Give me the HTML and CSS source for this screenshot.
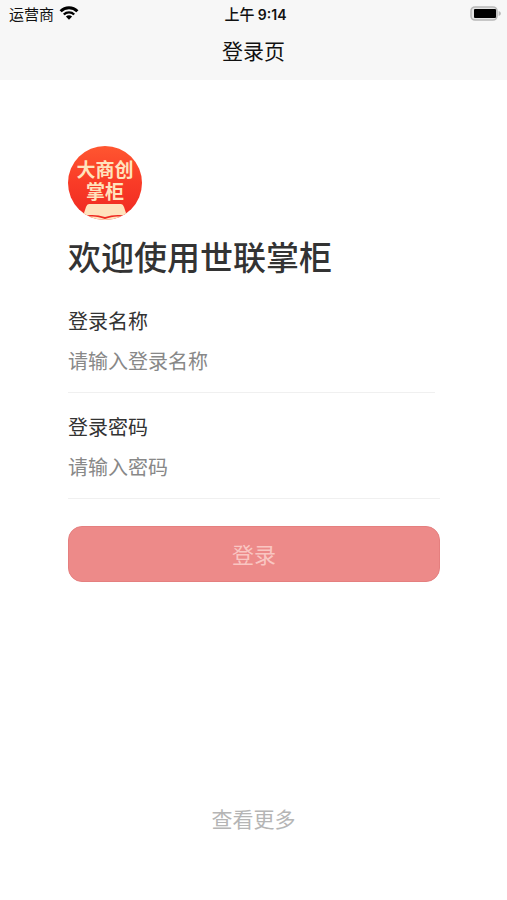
FILE: index.html
```html
<!DOCTYPE html>
<html lang="zh-CN">
<head>
    <meta charset="UTF-8">
    <meta name="viewport" content="width=device-width, initial-scale=1.0">
    <title>登录页</title>
    <link rel="stylesheet" href="styles.css">
</head>
<body>
    <header>
        <div class="status-bar">
            <div class="carrier">
                <span>运营商</span>
                <svg width="20" height="14" viewBox="0 0 20 14" aria-hidden="true">
                    <g fill="none" stroke="#000" stroke-width="3">
                        <path d="M1.6 5.2a12 12 0 0 1 16.8 0"/>
                        <path d="M4.8 8.5a7.5 7.5 0 0 1 10.4 0" stroke-width="2.4"/>
                    </g>
                    <path d="M6.9 10.6a4.6 4.6 0 0 1 6.2 0L10 13.8z"/>
                </svg>
            </div>
            <div class="time">上午 <span>9:14</span></div>
            <div class="battery">
                <svg width="32" height="15" viewBox="0 0 32 15" aria-hidden="true">
                    <rect x="1" y="1" width="26" height="13" rx="4" fill="#e4e4e4" stroke="#b8b8b8" stroke-width="1.6"/>
                    <rect x="4" y="3" width="22" height="9" rx="1"/>
                    <path d="M28.6 5c3 1 3 4 0 5z" fill="#b8b8b8"/>
                </svg>
            </div>
        </div>
        <h1>登录页</h1>
    </header>
    <main>
        <svg class="logo" viewBox="0 0 74 74" role="img" aria-label="大商创掌柜">
            <defs>
                <linearGradient id="logo-bg" x1="0" y1="0" x2="0" y2="1">
                    <stop offset="0" stop-color="#ff5630"/>
                    <stop offset="0.5" stop-color="#f93b27"/>
                    <stop offset="1" stop-color="#ee2922"/>
                </linearGradient>
                <clipPath id="logo-clip">
                    <circle cx="37" cy="37" r="37"/>
                </clipPath>
            </defs>
            <circle cx="37" cy="37" r="37" fill="url(#logo-bg)"/>
            <g clip-path="url(#logo-clip)" fill="#ffe3bd">
                <path d="M21 58h32q2 0 3 3l3 9c-9-2-15-1-22 1-7-2-13-3-22-1l3-9q1-3 3-3z"/>
                <path d="M20 71c6-1 11 0 17 2 6-2 11-3 17-2l-9 4H28z"/>
            </g>
            <text x="37" y="31" class="logo-text">大商创</text>
            <text x="37" y="53" class="logo-text">掌柜</text>
        </svg>
        <h2>欢迎使用世联掌柜</h2>
        <form>
            <div class="field name-field">
                <label for="username">登录名称</label>
                <input type="text" id="username" placeholder="请输入登录名称">
            </div>
            <div class="field">
                <label for="password">登录密码</label>
                <input type="password" id="password" placeholder="请输入密码">
            </div>
            <button type="button" class="login-button">登录</button>
        </form>
    </main>
    <footer>
        <a href="#">查看更多</a>
    </footer>
</body>
</html>
```
FILE: styles.css
```css
* {
    box-sizing: border-box;
}
body {
    font-family: "Noto Sans CJK SC", sans-serif;
    display: flex;
    flex-direction: column;
    min-height: 100vh;
    margin: 0;
    background-color: #fff;
    color: #333;
}
header {
    background-color: #f7f7f7;
    color: #111;
    padding-bottom: 6px;
}
.status-bar {
    display: grid;
    grid-template-columns: 1fr auto 1fr;
    align-items: center;
    height: 26px;
    padding: 0 5px 0 9px;
    font-size: 15px;
}
.carrier {
    display: flex;
    align-items: center;
    gap: 5px;
}
.time {
    font-weight: 500;
}
.time span {
    font-family: Inter, sans-serif;
    font-size: 14px;
    font-weight: 600;
}
.battery {
    display: flex;
    justify-content: flex-end;
}
h1 {
    margin: 0;
    font-size: 21px;
    font-weight: 400;
    line-height: 48px;
    text-align: center;
}
main {
    padding: 66px 67px 0 68px;
}
.logo {
    display: block;
    width: 74px;
    height: 74px;
}
.logo-text {
    fill: #ffe3bd;
    font-family: "Liberation Sans", "Noto Sans CJK SC", sans-serif;
    font-size: 19px;
    font-weight: 700;
    text-anchor: middle;
}
h2 {
    margin: 11px 0 26px;
    font-size: 33px;
    font-weight: 500;
    line-height: 50px;
}
.field {
    margin-bottom: 20px;
    border-bottom: 1px solid #f0f0f0;
}
.name-field {
    margin-right: 5px;
}
.field label {
    display: block;
    font-size: 20px;
    line-height: 28px;
}
.field input {
    display: block;
    width: 100%;
    height: 57px;
    padding: 0 0 6px;
    border: 0;
    outline: 0;
    background: none;
    color: #333;
    font-family: inherit;
    font-size: 20px;
}
.field input::placeholder {
    color: #888;
    opacity: 1;
}
.login-button {
    display: block;
    width: 100%;
    height: 56px;
    margin-top: 27px;
    padding: 0 0 2px;
    border: 1px solid #e57f7f;
    border-radius: 14px;
    background-color: #ed8a89;
    color: #f9c6c2;
    font-family: inherit;
    font-size: 22px;
}
footer {
    margin-top: auto;
    padding-bottom: 67px;
    text-align: center;
}
footer a {
    color: #b5b5b5;
    font-size: 21px;
    line-height: 30px;
    text-decoration: none;
}
```
